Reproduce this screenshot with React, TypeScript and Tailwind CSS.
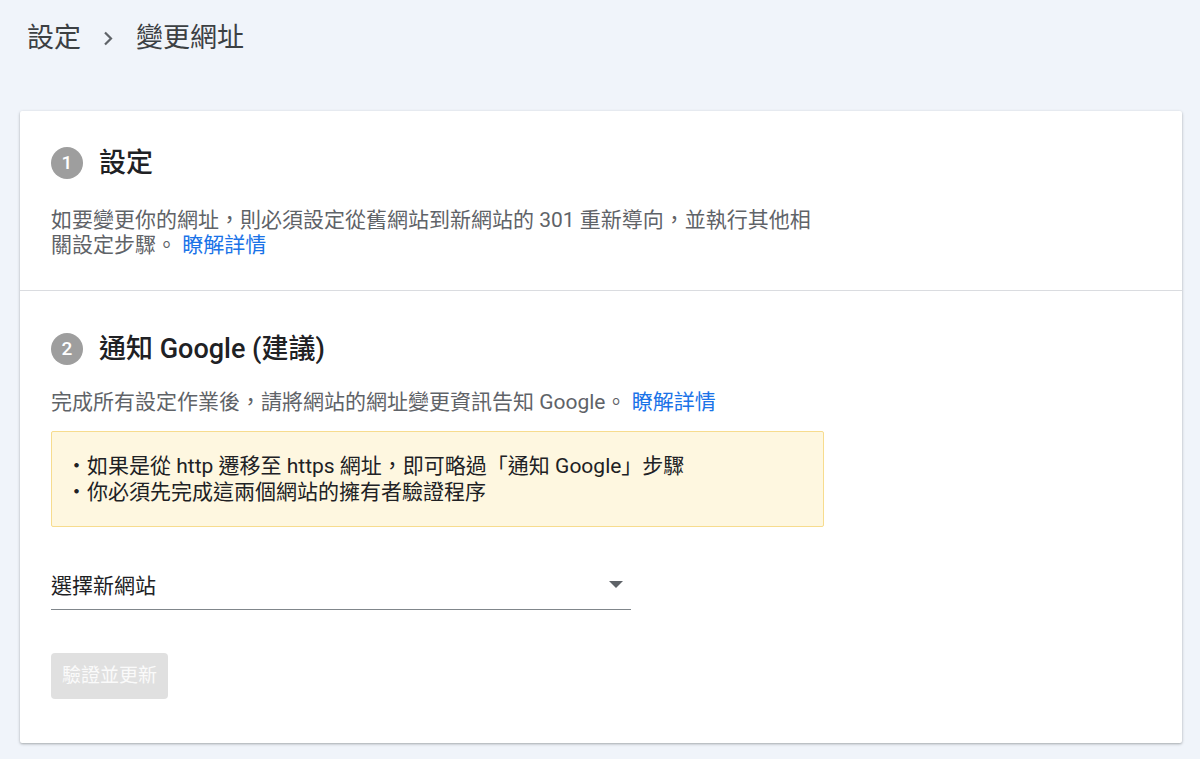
import React from 'react';

const font = { fontFamily: 'Roboto, "Noto Sans CJK TC", sans-serif' };

// Numbered step heading
const StepTitle = ({ n, title }: { n: number; title: string }) => (
  <div className="flex items-center gap-[16px]">
    <div className="w-[32px] h-[32px] rounded-full bg-[#9e9e9e] text-white flex items-center justify-center text-[19px] font-medium">
      {n}
    </div>
    <h2 className="text-[27px] font-medium text-[#202124] leading-[32px]">{title}</h2>
  </div>
);

const App: React.FC = () => {
  return (
    <div className="min-h-screen bg-[#f0f4fa]" style={font}>
      {/* Breadcrumb */}
      <div className="h-[78px] flex items-center pl-[27px] pb-[2px] text-[27px] text-[#3c4043]">
        <span>設定</span>
        <svg width="11" height="15" viewBox="0 0 11 15" className="ml-[22px] mr-[22px]" fill="none" stroke="#5f6368" strokeWidth="2.2">
          <path d="M2 1.5 8 7.5 2 13.5" />
        </svg>
        <span>變更網址</span>
      </div>

      <div className="ml-[20px] mr-[18px] mt-[33px] bg-white rounded-[2px] shadow-[0_1px_3px_rgba(60,64,67,0.3),0_1px_2px_rgba(60,64,67,0.15)]">
        {/* Step 1 */}
        <section className="px-[31px] pt-[36px] pb-[32px] border-b border-[#dadce0]">
          <StepTitle n={1} title="設定" />
          <p className="mt-[29px] max-w-[770px] text-[21px] leading-[25px] text-[#5f6368]">
            如要變更你的網址，則必須設定從舊網站到新網站的 301 重新導向，並執行其他相關設定步驟。{' '}
            <a className="text-[#1a73e8]">瞭解詳情</a>
          </p>
        </section>

        {/* Step 2 */}
        <section className="px-[31px] pt-[42px] pb-[44px]">
          <StepTitle n={2} title="通知 Google (建議)" />
          <p className="mt-[25px] text-[21px] leading-[25px] text-[#5f6368]">
            完成所有設定作業後，請將網站的網址變更資訊告知 Google。{' '}
            <a className="text-[#1a73e8]">瞭解詳情</a>
          </p>

          <div className="mt-[16px] w-[773px] bg-[#fef7e0] border border-[#f7dc8e] rounded-[2px] pl-[14px] pt-[21px] pb-[21px] text-[21px] leading-[26px] text-[#202124]">
            <div>・如果是從 http 遷移至 https 網址，即可略過「通知 Google」步驟</div>
            <div>・你必須先完成這兩個網站的擁有者驗證程序</div>
          </div>

          {/* Select */}
          <div className="mt-[44px] w-[580px] h-[39px] border-b border-[#80868b] flex items-center justify-between text-[21px] text-[#202124]">
            <span className="-mt-[6px]">選擇新網站</span>
            <svg width="14" height="7" viewBox="0 0 14 7" className="mr-[8px] -mt-[12px] fill-[#5f6368]">
              <path d="M0 0h14L7 7z" />
            </svg>
          </div>

          <button className="mt-[43px] h-[46px] px-[11px] rounded-[4px] bg-[#e0e0e0] text-[19px] text-[#fafafa]">
            驗證並更新
          </button>
        </section>
      </div>
    </div>
  );
};

export default App;
